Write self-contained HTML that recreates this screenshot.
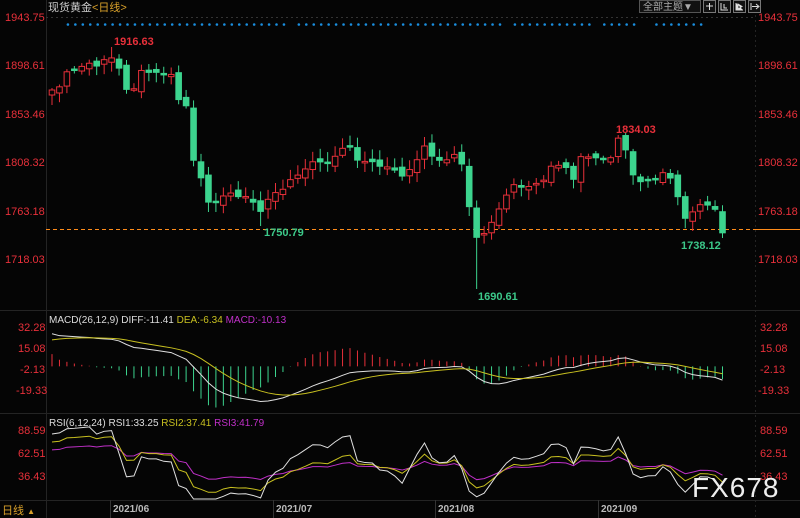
<!DOCTYPE html>
<html><head><meta charset="utf-8"><style>
body{margin:0;background:#000;width:800px;height:518px;overflow:hidden;font-family:"Liberation Sans","Noto Sans CJK SC",sans-serif}
svg{display:block}
</style></head><body>
<svg id="s" width="800" height="518" xmlns="http://www.w3.org/2000/svg" font-family="Liberation Sans, Noto Sans CJK SC, sans-serif">
<rect width="800" height="518" fill="#050505"/>
<g stroke="#242424" stroke-width="1">
<line x1="46.5" y1="0" x2="46.5" y2="518"/>
<line x1="755.5" y1="0" x2="755.5" y2="518" stroke-dasharray="2,3"/>
<line x1="0" y1="310.5" x2="800" y2="310.5"/>
<line x1="0" y1="413.5" x2="800" y2="413.5"/>
<line x1="0" y1="500.5" x2="800" y2="500.5"/>
</g>
<line x1="46" y1="17.5" x2="755" y2="17.5" stroke="#333" stroke-dasharray="2,3"/>
<text x="48" y="11" font-size="11" fill="#ccc">现货黄金<tspan fill="#d8a02a">&lt;日线&gt;</tspan></text>
<rect x="639.5" y="0.5" width="61" height="12" fill="#111" stroke="#555"/>
<text x="643" y="10" font-size="10" fill="#aaa">全部主题▼</text>
<g stroke="#777" fill="#111"><rect x="703.5" y="0.5" width="12" height="12"/><rect x="718.5" y="0.5" width="12" height="12"/><rect x="733.5" y="0.5" width="12" height="12"/><rect x="748.5" y="0.5" width="12" height="12"/></g>
<g fill="#e8e8e8"><path d="M706 6h7M709.5 3v7" stroke="#ddd"/><path d="M721 3v7h7M724 4v4h3" stroke="#ddd" fill="none"/><path d="M736 3v7h7M738 4l4 2.5-4 2.5z" stroke="#ddd"/><path d="M751 3v7M752 6.5h6M756 4l3 2.5-3 2.5" stroke="#ddd" fill="none"/></g>
<g font-size="11" fill="#e8303a">
<text x="5" y="21">1943.75</text><text x="5" y="69">1898.61</text><text x="5" y="118">1853.46</text><text x="5" y="166">1808.32</text><text x="5" y="215">1763.18</text><text x="5" y="263">1718.03</text>
<text x="758" y="21">1943.75</text><text x="758" y="69">1898.61</text><text x="758" y="118">1853.46</text><text x="758" y="166">1808.32</text><text x="758" y="215">1763.18</text><text x="758" y="263">1718.03</text>
<text x="18" y="331">32.28</text><text x="18" y="352">15.08</text><text x="20" y="373">-2.13</text><text x="16" y="394">-19.33</text>
<text x="760" y="331">32.28</text><text x="760" y="352">15.08</text><text x="760" y="373">-2.13</text><text x="758" y="394">-19.33</text>
<text x="18" y="434">88.59</text><text x="18" y="457">62.51</text><text x="18" y="480">36.43</text>
<text x="760" y="434">88.59</text><text x="760" y="457">62.51</text><text x="760" y="480">36.43</text>
</g>
<g id="dl"></g>
<line x1="755" y1="229.5" x2="800" y2="229.5" stroke="#ff8c1a"/>
<g id="cd"></g>
<g font-size="11" font-weight="bold">
<text x="114" y="45" fill="#e8303a">1916.63</text>
<text x="264" y="236" fill="#3cc98a">1750.79</text>
<text x="478" y="300" fill="#3cc98a">1690.61</text>
<text x="616" y="133" fill="#e8303a">1834.03</text>
<text x="681" y="249" fill="#3cc98a">1738.12</text>
</g>
<text x="49" y="323" font-size="10" fill="#ddd">MACD(26,12,9) DIFF:-11.41 <tspan fill="#c8c020">DEA:-6.34</tspan> <tspan fill="#c030c8">MACD:-10.13</tspan></text>
<text x="49" y="426" font-size="10" fill="#ddd">RSI(6,12,24) RSI1:33.25 <tspan fill="#c8c020">RSI2:37.41</tspan> <tspan fill="#c030c8">RSI3:41.79</tspan></text>
<text x="2" y="514" font-size="11" fill="#d8a02a">日线 <tspan font-size="8">▲</tspan></text>
<g font-size="10" fill="#bbb" font-weight="bold">
<text x="113" y="512">2021/06</text><text x="276" y="512">2021/07</text><text x="438" y="512">2021/08</text><text x="601" y="512">2021/09</text>
</g>
<g stroke="#333"><line x1="110.5" y1="500" x2="110.5" y2="518"/><line x1="273.5" y1="500" x2="273.5" y2="518"/><line x1="435.5" y1="500" x2="435.5" y2="518"/><line x1="598.5" y1="500" x2="598.5" y2="518"/></g>
<text x="692" y="497" font-size="28" fill="#eeeeee" letter-spacing="1">FX678</text>
</svg>
<script>
var kp=[[52,90],[60,85],[68,72],[75,68],[85,65],[95,65],[105,60],[110,58],[118,62],[125,90],[132,95],[140,68],[148,75],[155,70],[162,75],[170,70],[175,95],[182,100],[188,110],[193,160],[200,170],[205,200],[212,208],[220,195],[230,195],[240,195],[250,198],[258,212],[265,205],[272,195],[280,190],[290,182],[300,172],[310,165],[320,160],[330,165],[340,150],[347,140],[355,160],[365,160],[375,165],[385,165],[395,172],[405,175],[415,165],[425,143],[432,158],[440,160],[450,158],[458,155],[463,165],[470,212],[475,240],[482,235],[488,225],[495,222],[502,200],[510,188],[518,185],[525,188],[533,183],[540,188],[547,170],[553,165],[560,167],[568,165],[575,185],[580,157],[588,155],[595,160],[603,158],[610,160],[616,137],[622,145],[628,150],[634,180],[640,183],[648,178],[655,182],[662,172],[668,175],[675,180],[681,220],[688,215],[695,210],[702,205],[708,203],[715,210],[720,235],[725,232]];
function interp(x){for(var i=1;i<kp.length;i++){if(x<=kp[i][0]){var a=kp[i-1],b=kp[i];return a[1]+(b[1]-a[1])*(x-a[0])/(b[0]-a[0]);}}return kp[kp.length-1][1];}
var N=91,xs=[],cl=[],op=[],hi=[],lo=[];
for(var i=0;i<N;i++){var x=52+i*7.45;xs.push(x);cl.push(interp(x)+Math.sin(i*2.3)*2);}
for(i=0;i<N;i++){op.push(i?cl[i-1]+Math.sin(i*1.7)*3:95);var t=Math.min(op[i],cl[i]),b=Math.max(op[i],cl[i]);hi.push(t-2-Math.abs(Math.sin(i*3.1))*8);lo.push(b+2+Math.abs(Math.cos(i*2.7))*8);}
function near(x){var j=0;for(var i=0;i<N;i++)if(Math.abs(xs[i]-x)<Math.abs(xs[j]-x))j=i;return j;}
hi[near(110)]=47;lo[near(258)]=226;lo[near(475)]=289;hi[near(616)]=135;lo[near(720)]=238;
var d='';for(var xx=46;xx<755;xx+=7)d+='<rect x="'+xx+'" y="229" width="4" height="1" fill="#ff8c1a"/>';
document.getElementById('dl').innerHTML=d;
var h='';
for(i=0;i<N;i++){var x=xs[i],up=cl[i]<op[i],t=Math.min(op[i],cl[i]),b=Math.max(op[i],cl[i]);if(b-t<1.5)b=t+1.5;
var c=up?'#e8303a':'#3cd48e';
h+='<line x1="'+x+'" y1="'+hi[i]+'" x2="'+x+'" y2="'+lo[i]+'" stroke="'+c+'"/>';
h+='<rect x="'+(x-2.8)+'" y="'+t+'" width="5.6" height="'+(b-t)+'" fill="'+(up?'#050505':c)+'" stroke="'+c+'" stroke-width="1"/>';}
for(i=0;i<N;i++){if((xs[i]>=64&&xs[i]<=285)||(xs[i]>=294&&xs[i]<=500)||(xs[i]>=512&&xs[i]<=590)||(xs[i]>=598&&xs[i]<=640)||(xs[i]>=650&&xs[i]<=706))h+='<circle cx="'+(xs[i]+1)+'" cy="24.5" r="1.3" fill="#1a8fe0"/>';}
var p=cl.map(function(y){return 1943.75-(y-17)/1.0721;});
var e26=p[0]-30,e12=p[0]-2,dea=20,dif=[],de=[],mh=[];
for(i=0;i<N;i++){e12=e12+(p[i]-e12)*2/13;e26=e26+(p[i]-e26)*2/27;var dd=e12-e26;dea=dea+(dd-dea)*2/10;dif.push(dd);de.push(dea);mh.push(2*(dd-dea));}
function my(v){return 369-(v+2.13)*1.25;}
for(i=0;i<N;i++){var v=mh[i],c2=v>0?'#e8303a':'#3cd48e';var y1=my(0),y2=my(v);y2=Math.max(315,Math.min(412,y2));h+='<line x1="'+xs[i]+'" y1="'+y1+'" x2="'+xs[i]+'" y2="'+y2+'" stroke="'+c2+'" stroke-width="1"/>';}
function pl(arr,f,col){return '<polyline fill="none" stroke="'+col+'" stroke-width="1" points="'+arr.map(function(v,i){return xs[i]+','+Math.max(315,Math.min(412,f(v)));}).join(' ')+'"/>';}
h+=pl(dif,my,'#e0e0e0')+pl(de,my,'#c8c020');
function rsi(n,init){var ag=init,al=100-init,out=[];for(var i=0;i<N;i++){var ch=i?p[i]-p[i-1]:0;ag=(ag*(n-1)+Math.max(ch,0))/n;al=(al*(n-1)+Math.max(-ch,0))/n;out.push(100*ag/(ag+al+1e-9));}return out;}
function ry(v){return 430+(88.59-v)*0.882;}
function pr(arr,col){return '<polyline fill="none" stroke="'+col+'" stroke-width="1" points="'+arr.map(function(v,i){return xs[i]+','+Math.max(416,Math.min(499,ry(v)));}).join(' ')+'"/>';}
function sc(a,init){return a.map(function(v){return v;});}
var r24=rsi(24,0),r12=rsi(12,0),r6=rsi(6,0);
function mk(n,ratio){var ag=ratio*8,al=(1-ratio)*8,out=[];for(var i=0;i<N;i++){var ch=i?p[i]-p[i-1]:0;ag=(ag*(n-1)+Math.max(ch,0))/n;al=(al*(n-1)+Math.max(-ch,0))/n;out.push(100*ag/(ag+al+1e-9));}return out;}
h+=pr(mk(24,0.66),'#c030c8')+pr(mk(12,0.75),'#c8c020')+pr(mk(6,0.84),'#e0e0e0');
document.getElementById('cd').innerHTML=h;
</script>
</body></html>
